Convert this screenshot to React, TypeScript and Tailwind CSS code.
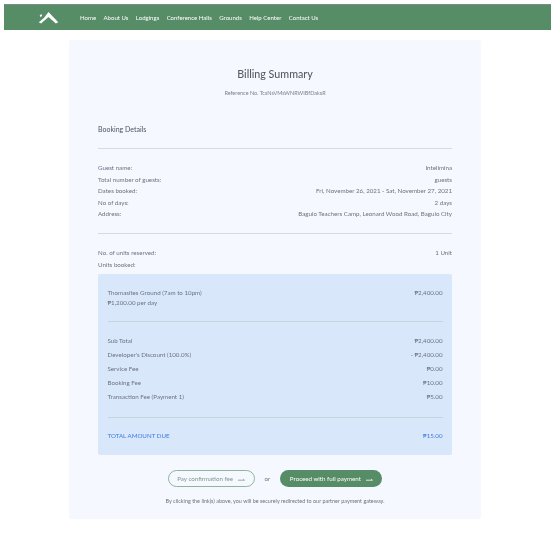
const navItems = ["Home", "About Us", "Lodgings", "Conference Halls", "Grounds", "Help Center", "Contact Us"];

const details = [
  ["Guest name:", "Intelimina"],
  ["Total number of guests:", "guests"],
  ["Dates booked:", "Fri, November 26, 2021 - Sat, November 27, 2021"],
  ["No of days:", "2 days"],
  ["Address:", "Baguio Teachers Camp, Leonard Wood Road, Baguio City"],
];

const fees = [
  ["Sub Total", "₱2,400.00"],
  ["Developer's Discount (100.0%)", "- ₱2,400.00"],
  ["Service Fee", "₱0.00"],
  ["Booking Fee", "₱10.00"],
  ["Transaction Fee (Payment 1)", "₱5.00"],
];

function Arrow({ className }: { className: string }) {
  return (
    <svg viewBox="0 0 7 4" className={className} fill="none" stroke="currentColor" strokeWidth="0.8">
      <path d="M0 3.2h6.5M6.5 3.2 5.2 2.2" />
    </svg>
  );
}

function Row({ label, value }: { label: string; value: string }) {
  return (
    <div className="flex items-center justify-between">
      <span>{label}</span>
      <span>{value}</span>
    </div>
  );
}

export default function App() {
  return (
    <div className="min-h-[543px] bg-white pl-1 pt-1 font-['Lato',sans-serif] text-[#6b7280] blur-[0.35px]">
      <header className="flex h-[26px] items-center border-t border-[#7d8b88] bg-[#568c66] pl-[34px] text-[6.05px] text-white">
        <svg viewBox="0 0 22 14" className="mr-[21px] h-[13px] w-[21px]" fill="#ffffff">
          <path d="M0.5 12 6 7.5l5-6.5L21.5 12l-2.6 1.5L11 6.5 3 13.5z" />
          <path d="M1.5 5.2 3 3.2l1.2 1.5L2.7 6.7z" />
        </svg>
        <nav className="flex gap-[7.4px]">
          {navItems.map((item) => (
            <span key={item}>{item}</span>
          ))}
        </nav>
      </header>

      <main className="ml-[65px] mt-[10px] h-[479px] w-[412px] rounded-[2px] bg-[#f5f8ff] px-[29px] pt-[27px]">
        <h1 className="text-center text-[10.7px] font-medium leading-[14px] text-[#555c66]">Billing Summary</h1>
        <p className="mt-[9px] text-center text-[5.5px] leading-[7px] text-[#7b8190]">
          Reference No. TcsNsVMsWNRWIBfDaksR
        </p>

        <h2 className="mt-[28px] text-[7px] leading-[9px] text-[#4b5563]">Booking Details</h2>
        <hr className="mt-[14px] border-[#d7dbe0]" />

        <section className="mt-[15px] flex flex-col gap-[3.5px] text-[6.2px] leading-[8px]">
          {details.map(([label, value]) => (
            <Row key={label} label={label} value={value} />
          ))}
        </section>
        <hr className="mt-[15px] border-[#d7dbe0]" />

        <section className="mt-[15px] flex flex-col gap-[4px] text-[6.2px] leading-[8px]">
          <Row label="No. of units reserved:" value="1 Unit" />
          <div>Units booked:</div>
        </section>

        <section className="mt-[5px] h-[181px] rounded-[2px] bg-[#d9e7fb] px-[9.5px] pt-[15px] text-[6.2px] leading-[8px]">
          <div className="flex justify-between">
            <div className="flex flex-col gap-[2px]">
              <span>Thomasites Ground (7am to 10pm)</span>
              <span>₱1,200.00 per day</span>
            </div>
            <span>₱2,400.00</span>
          </div>
          <hr className="mt-[14px] border-[#c9d3df]" />
          <div className="mt-[15px] flex flex-col gap-[6px]">
            {fees.map(([label, value]) => (
              <Row key={label} label={label} value={value} />
            ))}
          </div>
          <hr className="mt-[16px] border-[#c9d3df]" />
          <div className="mt-[14px] text-[#3f7ae0]">
            <Row label="TOTAL AMOUNT DUE" value="₱15.00" />
          </div>
        </section>

        <div className="mt-[15px] flex items-center justify-center gap-[9px] text-[6.2px]">
          <button className="flex h-[17px] w-[87px] items-center justify-center gap-[5px] rounded-full border border-[#8fb59b] text-[#7f9a8a]">
            Pay confirmation fee
            <Arrow className="h-[4px] w-[7px]" />
          </button>
          <span className="mx-[1px] text-[#6b7280]">or</span>
          <button className="flex h-[17px] w-[102px] items-center justify-center gap-[5px] rounded-full bg-[#568c66] text-white">
            Proceed with full payment
            <Arrow className="h-[4px] w-[7px]" />
          </button>
        </div>
        <p className="mt-[11px] text-center text-[5.45px] leading-[7px] text-[#6b7280]">
          By clicking the link(s) above, you will be securely redirected to our partner payment gateway.
        </p>
      </main>
    </div>
  );
}
